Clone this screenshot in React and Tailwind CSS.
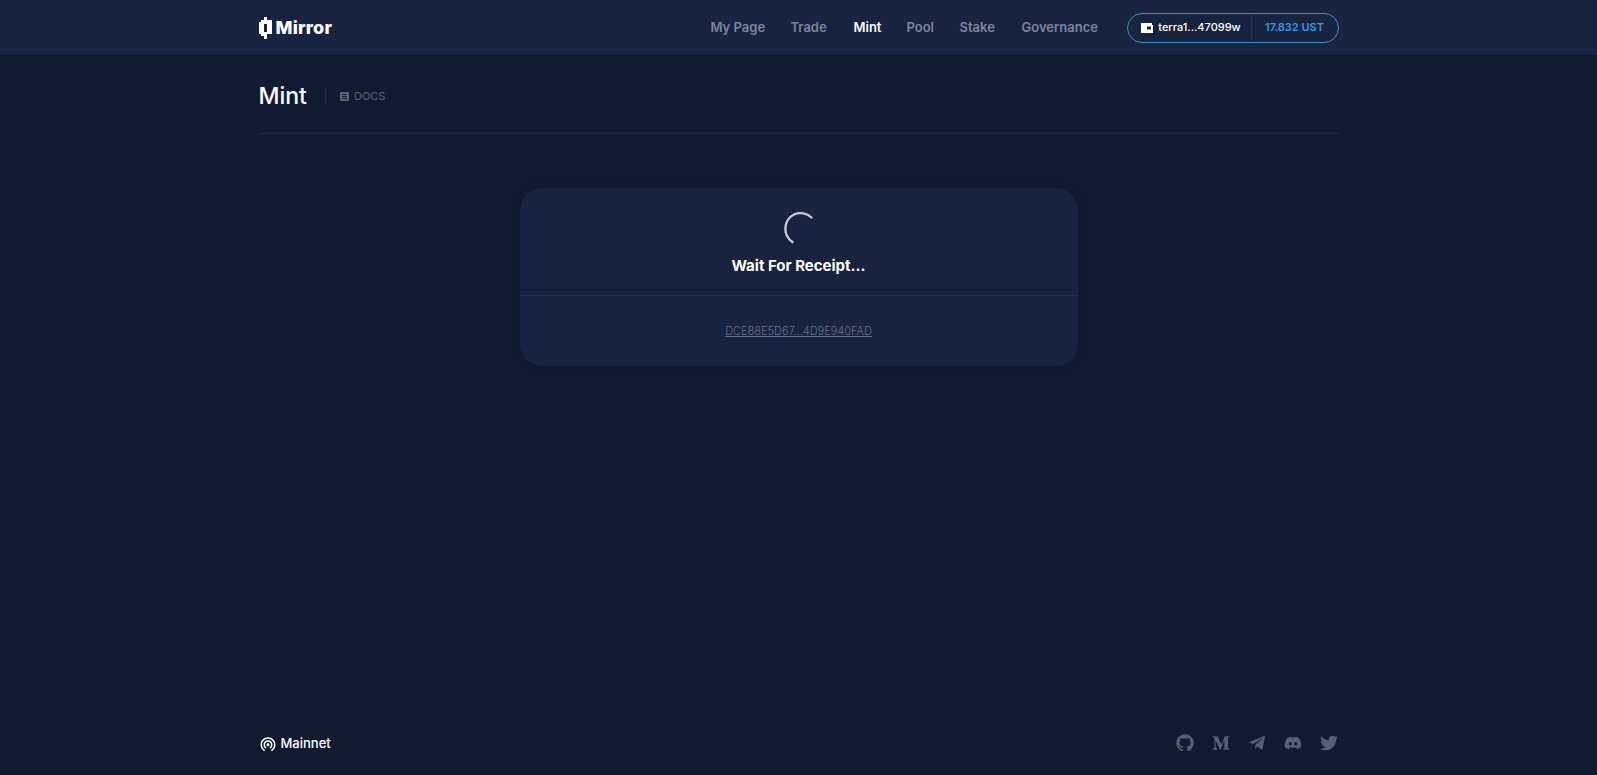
import React from 'react';
import { FaGithub, FaMediumM, FaTelegramPlane, FaDiscord, FaTwitter } from 'react-icons/fa';
import { MdWifiTethering } from 'react-icons/md';

const menu = [
  { label: 'My Page', className: 'w-[54px]' },
  { label: 'Trade', className: 'w-[37px]' },
  { label: 'Mint', className: 'w-[27px] text-white' },
  { label: 'Pool', className: 'w-[27px]' },
  { label: 'Stake', className: 'w-[36px]' },
  { label: 'Governance', className: 'w-[78px]' },
];

const socials = [FaGithub, FaMediumM, FaTelegramPlane, FaDiscord, FaTwitter];

function Logo() {
  return (
    <svg width="13" height="22" viewBox="0 0 13 22" className="shrink-0" fill="#fff">
      <path fillRule="evenodd" d="M5 0h3v3h5v14H8v5H5v-3H2v-2H0V5h2V3h3V0zM5 7v8h3V7H5z" />
    </svg>
  );
}

function WalletIcon() {
  return (
    <svg width="12" height="10" viewBox="0 0 12 10" className="shrink-0" fill="#fff">
      <path fillRule="evenodd" d="M0 0h11v2h1v8H0V0zm6 3.5v3h4v-3H6z" />
    </svg>
  );
}

export default function App() {
  return (
    <div className="flex h-[775px] flex-col overflow-hidden bg-[#101b32] font-['Inter',sans-serif] text-white">
      <header className="h-[55px] shrink-0 bg-[#17233f] shadow-[0_1px_2px_rgba(0,0,0,0.25)]">
        <div className="mx-auto flex h-full w-[1080px] items-center justify-between">
          <div className="flex items-center gap-[4px]">
            <Logo />
            <span className="text-[18px] font-extrabold tracking-[0.2px]">Mirror</span>
          </div>
          <div className="flex items-center">
            <nav className="flex gap-[26px] text-[13px] font-semibold whitespace-nowrap text-[#7d8499]">
              {menu.map((item) => (
                <a key={item.label} className={item.className}>{item.label}</a>
              ))}
            </nav>
            <div className="ml-[27px] flex h-[30px] w-[212px] items-center rounded-full border border-[#3f8ed0] text-[11px]">
              <div className="flex h-full flex-1 items-center justify-center gap-[5px] pl-[4px] font-medium">
                <WalletIcon />
                <span>terra1...47099w</span>
              </div>
              <div className="flex h-full w-[87px] items-center justify-center border-l border-[#26334f] font-semibold text-[#2f9bea]">
                17.832 UST
              </div>
            </div>
          </div>
        </div>
      </header>

      <main className="mx-auto flex w-[1080px] flex-1 flex-col">
        <div className="flex h-[79px] items-center border-b border-[#212c46] pt-[5px]">
          <h1 className="text-[23px] font-medium">Mint</h1>
          <div className="ml-[18px] h-[18px] border-l border-[#1e2940]" />
          <a className="ml-[14px] flex items-center gap-[5px] text-[11px] text-[#5b6278]">
            <svg width="9" height="9" viewBox="0 0 9 9" fill="#5b6278">
              <path fillRule="evenodd" d="M1 0h7a1 1 0 0 1 1 1v7a1 1 0 0 1-1 1H1a1 1 0 0 1-1-1V1a1 1 0 0 1 1-1zm1 2v1h5V2H2zm0 2v1h5V4H2zm0 2v1h5V6H2z" />
            </svg>
            DOCS
          </a>
        </div>

        <section className="mx-auto mt-[54px] w-[558px] rounded-[22px] bg-[#17233f] shadow-[0_0_16px_rgba(0,0,0,0.18)]">
          <div className="flex h-[108px] flex-col items-center border-b border-[#26324f] pt-[22px]">
            <svg width="36" height="36" viewBox="0 0 36 36" fill="none">
              <path d="M29.5 7.5A16 16 0 0 0 12 4.5 16 16 0 0 0 10.500 32" transform="translate(1 0)" stroke="#c7cad3" strokeWidth="2.4" strokeLinecap="round" />
            </svg>
            <h2 className="mt-[9px] text-[15px] font-bold">Wait For Receipt...</h2>
          </div>
          <div className="flex h-[70px] items-center justify-center">
            <a className="text-[11px] font-light text-[#687090] underline">DCE88E5D67...4D9E940FAD</a>
          </div>
        </section>
      </main>

      <footer className="mx-auto flex h-[46px] w-[1080px] shrink-0 items-start justify-between pt-[5px]">
        <div className="flex items-center gap-[4px] text-[13px] font-medium">
          <MdWifiTethering size={18} color="#fff" />
          <span>Mainnet</span>
        </div>
        <div className="mr-[1px] flex items-center gap-[18px] text-[#565e73]">
          {socials.map((Icon, i) => (
            <Icon key={i} size={18} />
          ))}
        </div>
      </footer>
    </div>
  );
}
